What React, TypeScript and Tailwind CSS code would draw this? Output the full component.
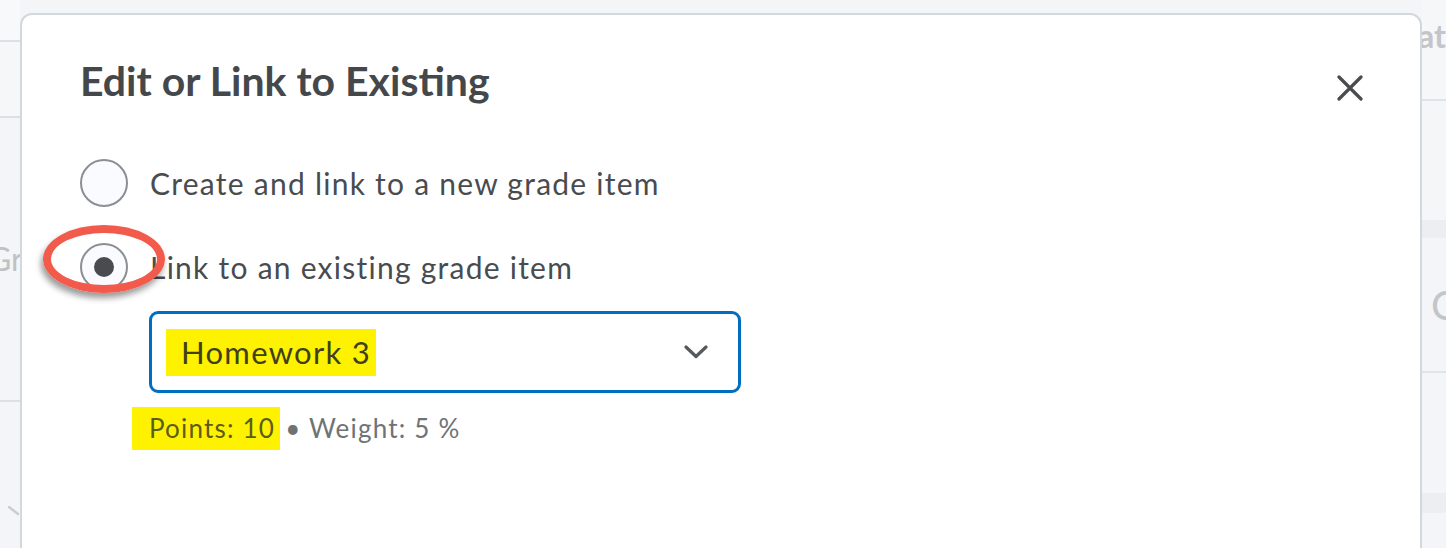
import * as React from "react"

const font = { fontFamily: "Lato, 'Open Sans', sans-serif" }

function CloseIcon() {
  return (
    <svg width="26" height="26" viewBox="0 0 26 26" fill="none" stroke="#494c4e" strokeWidth="3.2" strokeLinecap="round">
      <path d="M2 2 L24 24 M24 2 L2 24" />
    </svg>
  )
}

function Chevron() {
  return (
    <svg width="24" height="14" viewBox="0 0 24 14" fill="none" stroke="#565a5c" strokeWidth="3.2" strokeLinecap="round" strokeLinejoin="round">
      <path d="M2 2 L12 11.5 L22 2" />
    </svg>
  )
}

function Radio({ checked }: { checked?: boolean }) {
  return (
    <span className="flex h-[48px] w-[48px] shrink-0 items-center justify-center rounded-full border-2 border-[#8a8f93] bg-[#f9fbff]">
      {checked && <span className="h-[20px] w-[20px] rounded-full bg-[#494c4e]" />}
    </span>
  )
}

export default function App() {
  return (
    <div className="flex h-[548px] w-[1446px] overflow-hidden bg-[#f4f5f7] text-[#494c4e]" style={font}>
      {/* ── page behind the dialog, left edge ─────────────────── */}
      <div className="flex w-[20px] shrink-0 flex-col overflow-hidden">
        <div className="h-[42px] shrink-0 border-b-2 border-[#dde0e3] bg-[#f8f9fa]" />
        <div className="h-[76px] shrink-0 border-b-2 border-[#dde0e3] bg-[#f6f7f9]" />
        <div className="flex h-[284px] shrink-0 items-center border-b-2 border-[#dde0e3] bg-[#f4f5f8]">
          <span className="-ml-[12px] text-[32px] leading-none whitespace-nowrap text-[#bfc1c4]">Gr</span>
        </div>
        <div className="flex-1 bg-[#f4f5f8] pt-[104px] pl-[8px]">
          <svg width="12" height="10" viewBox="0 0 12 10" fill="none" stroke="#c9ccd0" strokeWidth="2.4" strokeLinecap="round">
            <path d="M1 1 L10 8" />
          </svg>
        </div>
      </div>

      {/* ── dialog ────────────────────────────────────────────── */}
      <div className="relative mt-[13px] h-[560px] w-[1402px] shrink-0 rounded-t-[12px] border-2 border-[#d1d8de] bg-white pt-[46px] pl-[58px] pr-[58px]">
        <div className="flex items-start justify-between">
          <h1 className="text-[41px] font-bold leading-[40px] text-[#45484a]">Edit or Link to Existing</h1>
          <button className="mt-[14px] mr-[-1px]">
            <CloseIcon />
          </button>
        </div>

        <div className="mt-[58px] flex flex-col gap-[36px]">
          <label className="flex items-center gap-[22px] text-[30px] leading-none tracking-[1.25px]">
            <Radio />
            <span>Create and link to a new grade item</span>
          </label>
          <label className="relative flex items-center gap-[22px] text-[30px] leading-none tracking-[1.25px]">
            <Radio checked />
            <span>Link to an existing grade item</span>
            {/* annotation ring */}
            <span className="absolute left-[-37px] top-[-18px] h-[68px] w-[122px] rounded-[50%] border-[8px] border-[#f25a4b] shadow-[-2px_5px_6px_rgba(0,0,0,0.4)]" />
          </label>
        </div>

        <div className="ml-[69px] mt-[20px] flex h-[82px] w-[592px] items-center justify-between rounded-[9px] border-[3px] border-[#006fbf] pl-[14px] pr-[30px]">
          <span className="flex h-[47px] items-center bg-[#fff200] pl-[15px] pr-[5px] text-[31px] tracking-[1.3px] text-[#40401c]">Homework 3</span>
          <Chevron />
        </div>

        <div className="ml-[52px] mt-[14px] flex items-center text-[26px] tracking-[1.2px] text-[#6e7376]">
          <span className="flex h-[43px] items-center bg-[#fff200] pl-[17px] pr-[5px] text-[#5c5c20]">Points: 10</span>
          <span className="ml-[5px]">• Weight: 5 %</span>
        </div>
      </div>

      {/* ── page behind the dialog, right edge ────────────────── */}
      <div className="flex flex-1 flex-col overflow-hidden">
        <div className="flex h-[101px] shrink-0 items-start border-b-2 border-[#e1e4e7] bg-[#f6f7f9] pt-[20px]">
          <span className="-ml-[4px] text-[32px] font-bold leading-none whitespace-nowrap text-[#c3c5c8]">at</span>
        </div>
        <div className="h-[119px] shrink-0 bg-[#f5f6f8]" />
        <div className="h-[18px] shrink-0 bg-[#eceef1]" />
        <div className="flex h-[135px] shrink-0 items-center border-b-2 border-[#e1e4e7] bg-[#f4f5f8]">
          <span className="ml-[9px] text-[40px] leading-none text-[#c3c5c8]">C</span>
        </div>
        <div className="h-[120px] shrink-0 bg-[#f4f5f8]" />
        <div className="h-[20px] shrink-0 bg-[#eceef1]" />
        <div className="flex-1 bg-[#f4f5f8]" />
      </div>
    </div>
  )
}
